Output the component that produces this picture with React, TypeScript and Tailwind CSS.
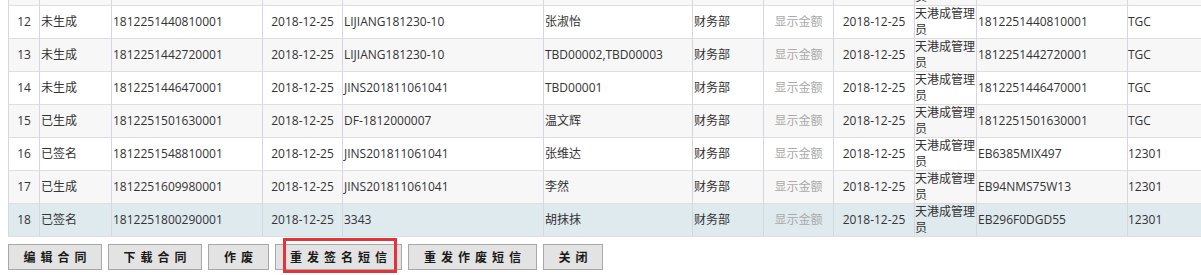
const cols = [
  "w-[31px] justify-center",
  "w-[72px] pl-[1px]",
  "w-[151px] pl-[1px]",
  "w-[80px] justify-center",
  "w-[201px] pl-[1px]",
  "w-[149px] pl-[1px]",
  "w-[71px] pl-[1px]",
  "w-[70px] justify-center text-[#aaaaaa]",
  "w-[81px] justify-center",
  "w-[62px] leading-[16px]",
  "w-[151px] pl-[1px]",
  "w-[74px]",
];

type Row = { cells: string[]; bg: string };

// row 11 sits mostly above the top edge; only the wrapped name peeks through
const rows: Row[] = [
  { bg: "bg-[#f7f7f7]", cells: ["", "", "", "", "", "", "", "", "", "天港成管理员", "", ""] },
  { bg: "bg-white", cells: ["12", "未生成", "1812251440810001", "2018-12-25", "LIJIANG181230-10", "张淑怡", "财务部", "显示金额", "2018-12-25", "天港成管理员", "1812251440810001", "TGC"] },
  { bg: "bg-[#f7f7f7]", cells: ["13", "未生成", "1812251442720001", "2018-12-25", "LIJIANG181230-10", "TBD00002,TBD00003", "财务部", "显示金额", "2018-12-25", "天港成管理员", "1812251442720001", "TGC"] },
  { bg: "bg-white", cells: ["14", "未生成", "1812251446470001", "2018-12-25", "JINS201811061041", "TBD00001", "财务部", "显示金额", "2018-12-25", "天港成管理员", "1812251446470001", "TGC"] },
  { bg: "bg-[#f7f7f7]", cells: ["15", "已生成", "1812251501630001", "2018-12-25", "DF-1812000007", "温文辉", "财务部", "显示金额", "2018-12-25", "天港成管理员", "1812251501630001", "TGC"] },
  { bg: "bg-white", cells: ["16", "已签名", "1812251548810001", "2018-12-25", "JINS201811061041", "张维达", "财务部", "显示金额", "2018-12-25", "天港成管理员", "EB6385MIX497", "12301"] },
  { bg: "bg-[#f7f7f7]", cells: ["17", "已生成", "1812251609980001", "2018-12-25", "JINS201811061041", "李然", "财务部", "显示金额", "2018-12-25", "天港成管理员", "EB94NMS75W13", "12301"] },
  { bg: "bg-[#dfeaef]", cells: ["18", "已签名", "1812251800290001", "2018-12-25", "3343", "胡抹抹", "财务部", "显示金额", "2018-12-25", "天港成管理员", "EB296F0DGD55", "12301"] },
];

const buttons = [
  { label: "编辑合同", w: "w-[94px]" },
  { label: "下载合同", w: "w-[94px]" },
  { label: "作废", w: "w-[61px]" },
  { label: "重发签名短信", w: "w-[127px]", marked: true },
  { label: "重发作废短信", w: "w-[129px]" },
  { label: "关闭", w: "w-[60px]" },
];

export default function App() {
  return (
    <div className="w-[1201px] h-[275px] overflow-hidden bg-white pl-[8px] text-[12px] text-[#333333] font-['Open_Sans','Noto_Sans_CJK_SC',sans-serif]">
      <div className="-mt-[27px] flex flex-col">
        {rows.map((r, i) => (
          <div key={i} className={`flex h-[33px] border-b border-[#dedede] ${r.bg}`}>
            {r.cells.map((c, j) => (
              <div
                key={j}
                className={`flex items-center shrink-0 overflow-hidden border-l border-[#d6d6e0] ${cols[j]}`}
              >
                <span>{c}</span>
              </div>
            ))}
          </div>
        ))}
      </div>

      <div className="mt-[7px] flex gap-[6px]">
        {buttons.map((b) => (
          <button
            key={b.label}
            type="button"
            className={`relative h-[26px] ${b.w} flex items-center justify-center border border-[#a8a8a8] bg-[#e3e3e3] pl-[5px] font-bold tracking-[5px] text-[#1a1a1a] font-['Noto_Sans_CJK_SC',sans-serif]`}
          >
            {b.label}
            {b.marked && (
              <span className="pointer-events-none absolute left-[7px] top-[-7px] w-[114px] h-[35px] border-[3px] border-[#e3343a]" />
            )}
          </button>
        ))}
      </div>
    </div>
  );
}
